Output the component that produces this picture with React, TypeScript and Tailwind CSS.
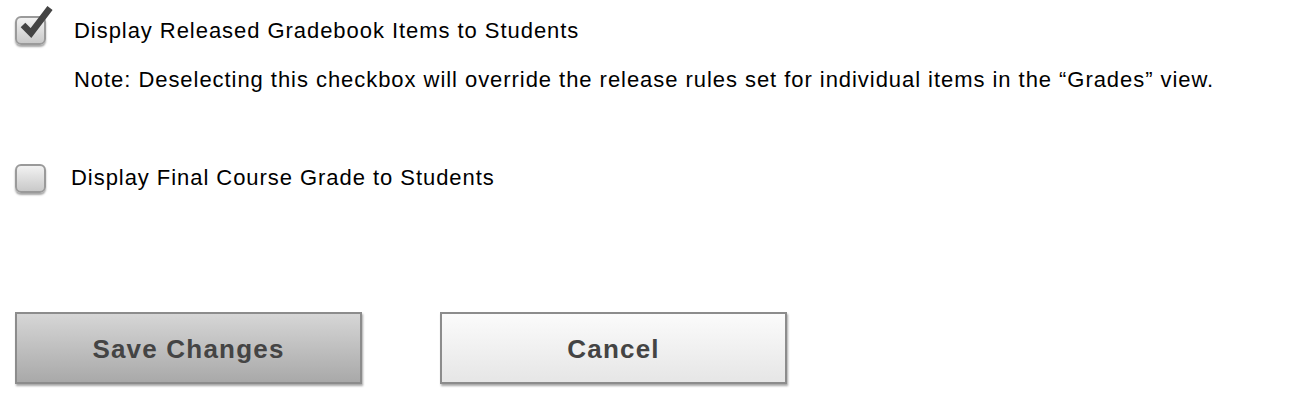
import React from 'react';

const CheckBox = ({ checked }: { checked: boolean }) => (
  <div className="relative w-[31px] h-[29px] shrink-0">
    <div className="absolute inset-0 rounded-[6px] border-2 border-[#9a9a9a] bg-gradient-to-b from-[#f2f2f2] to-[#c9c9c9] shadow-[0_2px_2px_rgba(0,0,0,0.35)]" />
    {checked && (
      <svg className="absolute left-[4px] top-[-12px]" width="36" height="36" viewBox="0 0 36 36">
        <path d="M4 21 L12 29 L31 4" fill="none" stroke="#444" strokeWidth="6.5" strokeLinecap="butt" strokeLinejoin="miter" />
      </svg>
    )}
  </div>
);

const App: React.FC = () => {
  return (
    <div className="w-[1304px] h-[412px] bg-white font-['Liberation_Sans',Arial,sans-serif] text-black">
      <div className="pl-[15px] pt-[16px]">
        {/* Released items */}
        <div className="flex items-center h-[29px]">
          <CheckBox checked />
          <span className="ml-[28px] text-[22px] leading-none tracking-[0.95px]">Display Released Gradebook Items to Students</span>
        </div>
        <p className="ml-[59px] mt-[24px] text-[22px] leading-none tracking-[0.95px]">
          Note: Deselecting this checkbox will override the release rules set for individual items in the “Grades” view.
        </p>

        {/* Final grade */}
        <div className="flex items-center h-[30px] mt-[72px]">
          <CheckBox checked={false} />
          <span className="ml-[25px] text-[22px] leading-none tracking-[0.95px]">Display Final Course Grade to Students</span>
        </div>

        {/* Buttons */}
        <div className="flex gap-[78px] mt-[119px]">
          <button className="w-[347px] h-[72px] pt-[3px] border-2 border-[#8c8c8c] bg-gradient-to-b from-[#d6d6d6] to-[#a9a9a9] shadow-[1px_2px_2px_rgba(0,0,0,0.35)] text-[26px] font-bold tracking-[1.2px] text-[#444]">
            Save Changes
          </button>
          <button className="w-[347px] h-[72px] pt-[3px] border-2 border-[#8c8c8c] bg-gradient-to-b from-[#fbfbfb] to-[#e6e6e6] shadow-[1px_2px_2px_rgba(0,0,0,0.35)] text-[26px] font-bold tracking-[1.2px] text-[#444]">
            Cancel
          </button>
        </div>
      </div>
    </div>
  );
};

export default App;
